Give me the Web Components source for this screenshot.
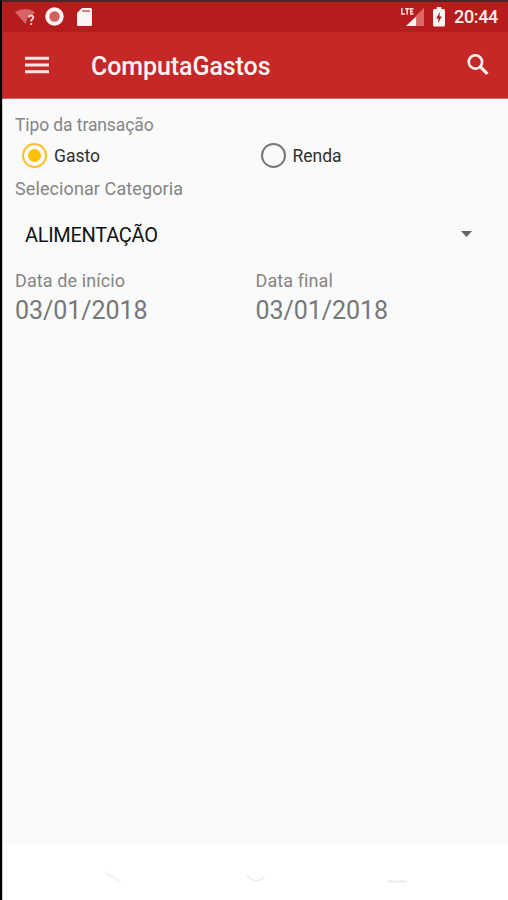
<!DOCTYPE html>
<html lang="pt-BR">
<head>
<meta charset="utf-8">
<meta name="viewport" content="width=device-width, initial-scale=1">
<title>ComputaGastos</title>
<style>
  html, body {
    margin: 0;
    height: 100%;
    overflow: hidden;
    font-family: Roboto, "Liberation Sans", sans-serif;
  }
</style>
</head>
<body>
<cg-screen>
  <cg-status-bar slot="header" time="20:44"></cg-status-bar>
  <cg-app-bar slot="header">ComputaGastos</cg-app-bar>
  <cg-form>
    <cg-label>Tipo da transação</cg-label>
    <cg-row class="types">
      <cg-radio checked>Gasto</cg-radio>
      <cg-radio>Renda</cg-radio>
    </cg-row>
    <cg-label class="wide">Selecionar Categoria</cg-label>
    <cg-spinner>ALIMENTAÇÃO</cg-spinner>
    <cg-row>
      <cg-date value="03/01/2018">Data de início</cg-date>
      <cg-date value="03/01/2018">Data final</cg-date>
    </cg-row>
  </cg-form>
  <cg-nav-bar slot="footer"></cg-nav-bar>
</cg-screen>

<script>
class CgScreen extends HTMLElement {
  constructor() {
    super();
    const shadowRoot = this.attachShadow({ mode: 'open' });
    shadowRoot.innerHTML = `
      <style>
      :host {
        display: flex;
        flex-direction: column;
        height: 900px;
        box-sizing: border-box;
        border-top: 2px solid #4b2527;
        border-left: 2px solid #000;
        background: #fff;
      }
      header {
        background: #c62828;
        border-left: 1px solid #a32a2c;
      }
      main {
        flex: 1;
        background: #fafafa;
        border-left: 1px solid #ccc;
      }
      footer {
        border-left: 1px solid #ccc;
      }
      </style>
      <header><slot name="header"></slot></header>
      <main><slot></slot></main>
      <footer><slot name="footer"></slot></footer>
    `
  }
}

class CgStatusBar extends HTMLElement {
  static get observedAttributes() { return ['time'] }

  constructor() {
    super();
    const shadowRoot = this.attachShadow({ mode: 'open' });
    shadowRoot.innerHTML = `
      <style>
      :host {
        display: flex;
        align-items: center;
        height: 30px;
        box-sizing: border-box;
        padding: 0 10px 0 12px;
        background: #b71c1c;
        color: #fdeeee;
      }
      svg {
        display: block;
      }
      .wifi { margin-right: 9px; }
      .record { margin-right: 13px; }
      .lte { margin: 0 9px 0 auto; }
      .battery { margin-right: 9px; }
      .time {
        font-size: 18px;
        font-weight: 500;
        letter-spacing: -.35px;
        line-height: 30px;
      }
      </style>
      <svg class="wifi" width="21" height="20" viewBox="0 0 21 20">
        <path d="M0 5Q10 -1 20 5L17 9Q12 8 12 13L10.500 17Z" fill="#d66464"/>
        <path d="M13.500 10.500Q14 8.500 16 8.500Q18.500 8.700 18.200 10.800Q18 12 16.200 13.200V14.500M16.200 16V18" fill="none" stroke="#f6cccc" stroke-width="2"/>
      </svg>
      <svg class="record" width="19" height="20" viewBox="0 0 19 20">
        <circle cx="9.500" cy="9.500" r="9.200" fill="#fff4f4"/>
        <circle cx="9.500" cy="9.500" r="5.200" fill="#d35f5f"/>
      </svg>
      <svg width="15" height="20" viewBox="0 0 15 20">
        <path d="M5 1H13.500Q15 1 15 2.500V17.500Q15 19 13.500 19H1.500Q0 19 0 17.500V6Z" fill="#fff4f4"/>
        <path d="M5 3H13V5H5Z" fill="#cd8583"/>
      </svg>
      <svg class="lte" width="23" height="20" viewBox="0 0 23 20">
        <path d="M.8 1V7H4M4 1.800H8.500M6.200 1.800V7.800M12.500 1.800H9.700V7H12.500M9.700 4.400H12" fill="none" stroke="#fbdede" stroke-width="1.500"/>
        <path d="M15.500 9V19H5Z" fill="#fff4f4"/>
        <path d="M15.500 8L23 1V19H15.500Z" fill="#da6666"/>
      </svg>
      <svg class="battery" width="12" height="20" viewBox="0 0 13 20" preserveAspectRatio="none">
        <path d="M4 0H9V2H11.500Q13 2 13 3.500V18Q13 19.500 11.500 19.500H1.500Q0 19.500 0 18V3.500Q0 2 1.500 2H4Z" fill="#fff4f4"/>
        <path d="M7.500 5L3.500 11.500H6L5.500 16L9.500 9.500H7Z" fill="#a61919"/>
      </svg>
      <span class="time" id="time"></span>
    `
  }

  attributeChangedCallback(name, oldValue, newValue) {
    if(name === 'time') {
      this.shadowRoot.getElementById('time').textContent = newValue;
    }
  }
}

class CgAppBar extends HTMLElement {
  constructor() {
    super();
    const shadowRoot = this.attachShadow({ mode: 'open' });
    shadowRoot.innerHTML = `
      <style>
      :host {
        display: flex;
        align-items: center;
        height: 67px;
        box-sizing: border-box;
        border-bottom: 1px solid #d46a6a;
        padding: 4px 19px 0 22px;
        color: #fff4f4;
      }
      .title {
        flex: 1;
        margin-left: 42px;
        font-size: 25px;
        font-weight: 500;
        letter-spacing: -.08px;
        line-height: 32px;
      }
      svg { display: block; }
      .menu { margin-bottom: 4px; }
      .search { margin-bottom: 5px; }
      </style>
      <svg class="menu" width="24" height="18" viewBox="0 0 24 18">
        <path d="M0 2.300H24M0 9H24M0 15.700H24" stroke="#fce4e4" stroke-width="3"/>
      </svg>
      <div class="title"><slot></slot></div>
      <svg class="search" width="22" height="23" viewBox="0 0 23 23">
        <circle cx="8.800" cy="8.800" r="7" fill="none" stroke="#fff0f0" stroke-width="2.800"/>
        <path d="M13.800 13.800L21.300 21.300" stroke="#fff0f0" stroke-width="3.400"/>
      </svg>
    `
  }
}

class CgForm extends HTMLElement {
  constructor() {
    super();
    const shadowRoot = this.attachShadow({ mode: 'open' });
    shadowRoot.innerHTML = `
      <style>
      :host {
        display: flex;
        flex-direction: column;
        padding: 15px 12px 0;
      }
      </style>
      <slot></slot>
    `
  }
}

class CgLabel extends HTMLElement {
  constructor() {
    super();
    const shadowRoot = this.attachShadow({ mode: 'open' });
    shadowRoot.innerHTML = `
      <style>
      :host {
        display: block;
        font-size: 17.5px;
        letter-spacing: -.1px;
        line-height: 22px;
        color: #858585;
        white-space: nowrap;
      }
      :host(.wide) {
        font-size: 18px;
        letter-spacing: .1px;
      }
      </style>
      <slot></slot>
    `
  }
}

// two columns of about the same width
class CgRow extends HTMLElement {
  constructor() {
    super();
    const shadowRoot = this.attachShadow({ mode: 'open' });
    shadowRoot.innerHTML = `
      <style>
      :host {
        display: grid;
        grid-template-columns: 240.5px 1fr;
      }
      :host(.types) {
        grid-template-columns: 238.5px 1fr;
        padding-left: 7px;
      }
      </style>
      <slot></slot>
    `
  }
}

class CgRadio extends HTMLElement {
  constructor() {
    super();
    const shadowRoot = this.attachShadow({ mode: 'open' });
    shadowRoot.innerHTML = `
      <style>
      :host {
        display: flex;
        align-items: center;
        gap: 7px;
        height: 42px;
        box-sizing: border-box;
        padding-bottom: 3px;
        font-size: 17.5px;
        color: #303030;
        --ring: #777;
      }
      :host([checked]) { --ring: #fdbf2d; }
      .ring {
        display: grid;
        place-items: center;
        width: 25px;
        height: 25px;
        box-sizing: border-box;
        border: 2.5px solid var(--ring);
        border-radius: 50%;
      }
      :host([checked]) .ring::after {
        content: '';
        width: 13px;
        height: 13px;
        border-radius: 50%;
        background: #ffc107;
      }
      span { padding-top: 1px; }
      </style>
      <div class="ring"></div>
      <span><slot></slot></span>
    `
  }
}

class CgSpinner extends HTMLElement {
  constructor() {
    super();
    const shadowRoot = this.attachShadow({ mode: 'open' });
    shadowRoot.innerHTML = `
      <style>
      :host {
        display: flex;
        align-items: center;
        justify-content: space-between;
        height: 70px;
        box-sizing: border-box;
        padding: 0 24px 0 10px;
        font-size: 20px;
        letter-spacing: -.3px;
        color: #111;
      }
      svg { margin-bottom: 2px; }
      </style>
      <span><slot></slot></span>
      <svg width="11" height="6" viewBox="0 0 11 6"><path d="M0 0H11L5.500 6Z" fill="#666"/></svg>
    `
  }
}

class CgDate extends HTMLElement {
  static get observedAttributes() { return ['value'] }

  constructor() {
    super();
    const shadowRoot = this.attachShadow({ mode: 'open' });
    shadowRoot.innerHTML = `
      <style>
      :host {
        display: block;
        color: #777;
      }
      .value {
        font-size: 25px;
        letter-spacing: -.05px;
        line-height: 38px;
      }
      </style>
      <cg-label class="wide"><slot></slot></cg-label>
      <div class="value" id="value"></div>
    `
  }

  attributeChangedCallback(name, oldValue, newValue) {
    if(name === 'value') {
      this.shadowRoot.getElementById('value').textContent = newValue;
    }
  }
}

class CgNavBar extends HTMLElement {
  constructor() {
    super();
    const shadowRoot = this.attachShadow({ mode: 'open' });
    shadowRoot.innerHTML = `
      <style>
      :host {
        display: flex;
        justify-content: space-between;
        height: 56px;
        box-sizing: border-box;
        padding: 27px 101px 0 101px;
        background: #fff;
      }
      svg { display: block; }
      </style>
      <svg width="19" height="14" viewBox="0 0 19 14"><path d="M1 1.500L17 11" stroke="#f0f0f0" stroke-width="2"/></svg>
      <svg width="20" height="14" viewBox="0 0 20 14"><path d="M1 4Q9 15 18 6" fill="none" stroke="#f0f0f0" stroke-width="2"/></svg>
      <svg width="19" height="14" viewBox="0 0 19 14"><path d="M0 10.500H19" stroke="#ececec" stroke-width="2"/></svg>
    `
  }
}

customElements.define('cg-screen', CgScreen);
customElements.define('cg-status-bar', CgStatusBar);
customElements.define('cg-app-bar', CgAppBar);
customElements.define('cg-form', CgForm);
customElements.define('cg-label', CgLabel);
customElements.define('cg-row', CgRow);
customElements.define('cg-radio', CgRadio);
customElements.define('cg-spinner', CgSpinner);
customElements.define('cg-date', CgDate);
customElements.define('cg-nav-bar', CgNavBar);
</script>
</body>
</html>
